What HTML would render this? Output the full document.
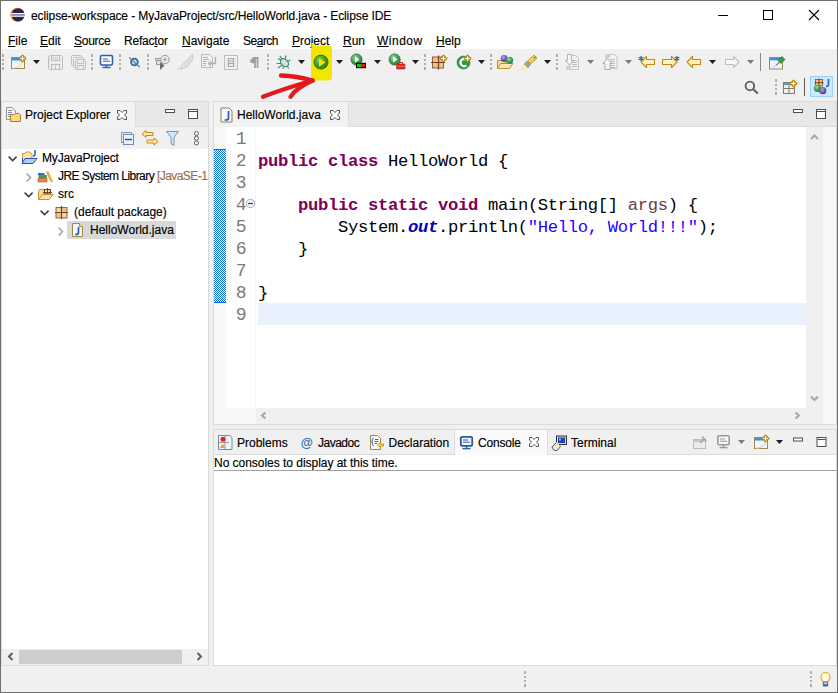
<!DOCTYPE html>
<html><head><meta charset="utf-8">
<style>
html,body{margin:0;padding:0}
body{width:838px;height:693px;overflow:hidden;position:relative;background:#f0f0f0;font-family:"Liberation Sans",sans-serif;font-size:12px;color:#000}
.a{position:absolute}
.t{position:absolute;white-space:nowrap;line-height:1;-webkit-text-stroke:0.15px currentColor}
svg{position:absolute;overflow:visible}
.mono{font-family:"Liberation Mono",monospace}
u{text-decoration:underline;text-decoration-thickness:1px}
</style></head><body>

<!-- title + menu bar -->
<div class="a" style="left:1px;top:1px;width:836px;height:48px;background:#fff"></div>

<!-- toolbar area already body bg -->

<!-- LEFT PANEL -->
<div class="a" style="left:1px;top:101px;width:208px;height:565px;box-sizing:border-box;border:1px solid #dadada;background:#fff"></div>
<div class="a" style="left:2px;top:102px;width:133px;height:25px;background:#f2f2f2"></div>
<div class="a" style="left:135px;top:102px;width:1px;height:25px;background:#dcdcdc"></div>
<div class="a" style="left:136px;top:102px;width:72px;height:24px;background:#e8e8e8"></div>
<div class="a" style="left:136px;top:126px;width:72px;height:1px;background:#dcdcdc"></div>
<div class="a" style="left:2px;top:127px;width:206px;height:22px;background:#f0f0f0"></div>
<!-- h scrollbar -->
<div class="a" style="left:2px;top:649px;width:206px;height:16px;background:#f0f0f0"></div>
<div class="a" style="left:19px;top:650px;width:163px;height:14px;background:#cdcdcd"></div>

<!-- EDITOR PANEL -->
<div class="a" style="left:213px;top:101px;width:624px;height:324px;box-sizing:border-box;border:1px solid #dadada;background:#fff"></div>
<div class="a" style="left:214px;top:102px;width:134px;height:25px;background:#f2f2f2"></div>
<div class="a" style="left:348px;top:102px;width:1px;height:25px;background:#dcdcdc"></div>
<div class="a" style="left:349px;top:102px;width:487px;height:24px;background:#e8e8e8"></div>
<div class="a" style="left:349px;top:126px;width:487px;height:1px;background:#dcdcdc"></div>
<!-- ruler -->
<div class="a" style="left:214px;top:127px;width:12px;height:297px;background:#f7f7f7"></div>
<div class="a" style="left:214px;top:149px;width:12px;height:154px;background-color:#fff;background-image:conic-gradient(#0a6fe0 25%,#fff 0 50%,#0a6fe0 0 75%,#fff 0);background-size:2px 2px"></div>
<div class="a" style="left:214px;top:149px;width:12px;height:1px;background:#0a6fe0"></div>
<div class="a" style="left:214px;top:302px;width:12px;height:1px;background:#0a6fe0"></div>
<div class="a" style="left:255px;top:127px;width:1px;height:281px;background:#f4f4f4"></div>
<div class="a" style="left:258px;top:303px;width:548px;height:22px;background:#e8f2fe"></div>
<!-- v scrollbar -->
<div class="a" style="left:806px;top:127px;width:17px;height:297px;background:#f0f0f0"></div>
<div class="a" style="left:823px;top:127px;width:13px;height:297px;background:#f7f7f7"></div>
<div class="a" style="left:214px;top:408px;width:42px;height:16px;background:#f7f7f7"></div>
<div class="a" style="left:256px;top:408px;width:567px;height:16px;background:#f0f0f0"></div>

<!-- CONSOLE PANEL -->
<div class="a" style="left:213px;top:429px;width:624px;height:237px;box-sizing:border-box;border:1px solid #dadada;background:#fff"></div>
<div class="a" style="left:214px;top:430px;width:240px;height:24px;background:#f0f0f0"></div>
<div class="a" style="left:214px;top:454px;width:240px;height:1px;background:#dcdcdc"></div>
<div class="a" style="left:454px;top:430px;width:1px;height:25px;background:#dcdcdc"></div>
<div class="a" style="left:455px;top:430px;width:92px;height:25px;background:#fafafa"></div>
<div class="a" style="left:547px;top:430px;width:1px;height:25px;background:#dcdcdc"></div>
<div class="a" style="left:548px;top:430px;width:288px;height:24px;background:#f0f0f0"></div>
<div class="a" style="left:548px;top:454px;width:288px;height:1px;background:#dcdcdc"></div>
<div class="a" style="left:214px;top:470px;width:622px;height:1px;background:#a0a0a0"></div>


<!-- TITLE TEXT -->
<div class="t" style="left:31px;top:10px;letter-spacing:-0.106px">eclipse-workspace - MyJavaProject/src/HelloWorld.java - Eclipse IDE</div>
<!-- MENU -->
<div class="t" style="left:8px;top:35px"><u>F</u>ile</div>
<div class="t" style="left:40px;top:35px"><u>E</u>dit</div>
<div class="t" style="left:74px;top:35px;letter-spacing:-0.25px"><u>S</u>ource</div>
<div class="t" style="left:124px;top:35px;letter-spacing:-0.2px">Refac<u>t</u>or</div>
<div class="t" style="left:182px;top:35px"><u>N</u>avigate</div>
<div class="t" style="left:243px;top:35px;letter-spacing:-0.5px">Se<u>a</u>rch</div>
<div class="t" style="left:292px;top:35px"><u>P</u>roject</div>
<div class="t" style="left:343px;top:35px"><u>R</u>un</div>
<div class="t" style="left:377px;top:35px;letter-spacing:0.5px"><u>W</u>indow</div>
<div class="t" style="left:436px;top:35px"><u>H</u>elp</div>

<!-- TAB TEXTS -->
<div class="t" style="left:25px;top:109px">Project Explorer</div>
<div class="t" style="left:237px;top:109px">HelloWorld.java</div>

<!-- TREE -->
<div class="a" style="left:2px;top:149px;width:206px;height:500px;overflow:hidden">
<div class="a" style="left:65px;top:72px;width:109px;height:18px;background:#d9d9d9"></div>
<div class="t" style="left:40px;top:3px;letter-spacing:-0.15px">MyJavaProject</div>
<div class="t" style="left:56px;top:21px;letter-spacing:-0.55px">JRE System Library <span style="color:#95724a;letter-spacing:-0.55px">[JavaSE-1.8]</span></div>
<div class="t" style="left:56px;top:39px">src</div>
<div class="t" style="left:72px;top:57px">(default package)</div>
<div class="t" style="left:88px;top:75px">HelloWorld.java</div>
</div>
<!-- LINE NUMBERS -->
<div class="a mono" style="left:226px;top:127px;width:20.5px;text-align:right;font-size:18px;line-height:22px;color:#7a7a7a;padding-top:1px">1<br>2<br>3<br>4<br>5<br>6<br>7<br>8<br>9</div>
<!-- CODE -->
<div class="a mono" style="left:258px;top:127px;font-size:17.2px;letter-spacing:-0.32px;line-height:22px;white-space:pre;padding-top:1.5px;color:#000"><br><b style="color:#7f0055">public</b> <b style="color:#7f0055">class</b> HelloWorld {
<br>    <b style="color:#7f0055">public</b> <b style="color:#7f0055">static</b> <b style="color:#7f0055">void</b> main(String[] <span style="color:#6a3e3e">args</span>) {
        System.<b style="color:#0000c0;font-style:italic">out</b>.println(<span style="color:#2a00ff">"Hello, World!!!"</span>);
    }
<br>}
</div>

<!-- CONSOLE TABS -->
<div class="t" style="left:237px;top:437px">Problems</div>
<div class="t" style="left:318px;top:437px;letter-spacing:-0.5px">Javadoc</div>
<div class="t" style="left:388.5px;top:437px">Declaration</div>
<div class="t" style="left:478px;top:437px;letter-spacing:-0.2px">Console</div>
<div class="t" style="left:571px;top:437px">Terminal</div>
<div class="t" style="left:214px;top:457px;letter-spacing:-0.03px">No consoles to display at this time.</div>

<!-- ICONS1 -->
<svg class="a" style="left:0;top:0" width="838" height="693" viewBox="0 0 838 693">
<defs>
 <g id="dots"><rect x="0" y="0" width="2" height="3" fill="#b8ae9a"/><rect x="0" y="5" width="2" height="2" fill="#b8ae9a"/><rect x="0" y="9" width="2" height="2" fill="#b8ae9a"/><rect x="0" y="13" width="2" height="3" fill="#b8ae9a"/></g>
 <path id="dd" d="M0 0h7l-3.5 4z"/>
 <g id="sparkle"><path d="M0 -3.3 L3.3 0 L0 3.3 L-3.3 0Z" fill="#c69c24" stroke="#b48a18" stroke-width="1.4" stroke-linejoin="round"/><path d="M0 -2.3V2.3M-2.3 0H2.3" stroke="#fffbe8" stroke-width="1.1"/></g>
 <g id="closex"><path d="M0.5 0.5H3L5 2.5L7 0.5H9.5V3L7.5 5L9.5 7V9.5H7L5 7.5L3 9.5H0.5V7L2.5 5L0.5 3Z" fill="#fff" stroke="#505050" stroke-width="1"/></g>
 <g id="minbtn"><rect x="0.5" y="0.5" width="9" height="3" fill="#fff" stroke="#4d4d4d"/></g>
 <g id="maxbtn"><rect x="0.5" y="0.5" width="9" height="9" fill="#fff" stroke="#4d4d4d"/><path d="M1 2.5H9" stroke="#4d4d4d"/></g>
 <radialGradient id="gGreen" cx="0.4" cy="0.35" r="0.7"><stop offset="0" stop-color="#8fd45a"/><stop offset="0.6" stop-color="#3e9a1a"/><stop offset="1" stop-color="#2a7a10"/></radialGradient>
 <radialGradient id="gGreen2" cx="0.4" cy="0.35" r="0.7"><stop offset="0" stop-color="#9fd8a0"/><stop offset="0.6" stop-color="#3d9a50"/><stop offset="1" stop-color="#2a7a38"/></radialGradient>
 <radialGradient id="gPurple" cx="0.4" cy="0.35" r="0.7"><stop offset="0" stop-color="#b8a8e8"/><stop offset="0.6" stop-color="#6a52b8"/><stop offset="1" stop-color="#4a3890"/></radialGradient>
</defs>

<!-- title icon -->
<circle cx="17.3" cy="14.8" r="7" fill="#f7941e"/>
<circle cx="18.1" cy="14.8" r="6.6" fill="#2c2255"/>
<rect x="11.2" y="13" width="13.8" height="1.1" fill="#fff"/>
<rect x="11.2" y="14.1" width="13.8" height="1.6" fill="#9a93b8"/>
<rect x="11.2" y="15.7" width="13.8" height="1.1" fill="#fff"/>
<!-- window controls -->
<path d="M718 15.5H728" stroke="#000" stroke-width="1"/>
<rect x="763.5" y="10.5" width="9" height="9" fill="none" stroke="#000"/>
<path d="M809 10L819 20M819 10L809 20" stroke="#000" stroke-width="1.1"/>

<!-- toolbar row 1 -->
<use href="#dots" x="2" y="54"/>
<use href="#dots" x="91" y="54"/>
<use href="#dots" x="119" y="54"/>
<use href="#dots" x="147" y="54"/>
<use href="#dots" x="267" y="54"/>
<use href="#dots" x="424" y="54"/>
<use href="#dots" x="490" y="54"/>
<use href="#dots" x="556" y="54"/>
<use href="#dots" x="775" y="79"/>

<g fill="#1e1e1e">
<use href="#dd" x="33" y="60"/>
<use href="#dd" x="298" y="60"/>
<use href="#dd" x="336" y="60"/>
<use href="#dd" x="374" y="60"/>
<use href="#dd" x="412" y="60"/>
<use href="#dd" x="478" y="60"/>
<use href="#dd" x="544" y="60"/>
<use href="#dd" x="709" y="60"/>
<use href="#dd" x="776" y="440"/>
</g>
<g fill="#7a7a7a">
<use href="#dd" x="587" y="60"/>
<use href="#dd" x="625" y="60"/>
<use href="#dd" x="747" y="60"/>
<use href="#dd" x="738" y="440"/>
</g>

<!-- new wizard -->
<rect x="11.5" y="57.5" width="13" height="11" fill="#eef7fd" stroke="#a08a58"/>
<rect x="12" y="58" width="12" height="2.5" fill="#3f8fd6"/>
<path d="M13 68C18 68 22 66 23 60" stroke="#f0d890" stroke-width="1.2" fill="none"/>
<use href="#sparkle" x="22.5" y="58.5"/>

<!-- save disabled -->
<g fill="#ececec" stroke="#bdbdbd" stroke-width="1">
<path d="M48.5 57.5Q48.5 55.5 50.5 55.5H61.5L62.5 56.5V68.5Q62.5 69.5 61.5 69.5H49.5Q48.5 69.5 48.5 68.5Z"/>
<rect x="51.5" y="55.5" width="8" height="5"/>
<rect x="51.5" y="64.5" width="8" height="5"/>
</g>
<path d="M53 57.5H58M53 59H58" stroke="#d0d0d0"/>
<path d="M55.5 66V69" stroke="#bdbdbd"/>
<!-- save all disabled -->
<g fill="#ececec" stroke="#c2c2c2" stroke-width="1">
<rect x="71.5" y="55.5" width="10" height="10" rx="1"/>
<rect x="73.5" y="57.5" width="10" height="10" rx="1"/>
<path d="M75.5 60.5Q75.5 59.5 76.5 59.5H84.5L85.5 60.5V68.5Q85.5 69.5 84.5 69.5H76.5Q75.5 69.5 75.5 68.5Z"/>
<rect x="77.5" y="59.5" width="6" height="4"/>
<rect x="77.5" y="65.5" width="6" height="4"/>
</g>

<!-- monitor blue -->
<rect x="100.5" y="55.5" width="12" height="9.5" rx="1.5" fill="#fff" stroke="#2f5fa8" stroke-width="1.6"/>
<path d="M103 59H108M103 61.2H110" stroke="#2f5fa8" stroke-width="1"/>
<path d="M106.5 65V67" stroke="#2f5fa8" stroke-width="1.5"/>
<path d="M102.5 67.5H110.5" stroke="#2f5fa8" stroke-width="1.4"/>

<!-- skip breakpoints -->
<circle cx="134.4" cy="62" r="3.4" fill="#c8ddf0" stroke="#1f6fb5" stroke-width="1.8"/>
<path d="M129.3 57.5L139.8 67.3" stroke="#7a7a7a" stroke-width="1.2"/>

<!-- disabled toggle icon -->
<g stroke="#9a9a9a" fill="#e0e0e0" stroke-width="1">
<path d="M155.5 58.5H163.5V60.5H155.5Z"/>
<path d="M156.5 60.5H162.5V64.5H156.5Z"/>
<circle cx="165" cy="59.5" r="4.2" fill="#eaeaea"/>
</g>
<path d="M163 59.5H167M165 57.5V61.5" stroke="#9a9a9a" stroke-width="0.9"/>
<path d="M160 62L160 70L164.5 65.5Z" fill="#6e6e6e"/>

<!-- disabled pen -->
<path d="M192.5 54.5L183 64L186.5 67.5L193 59Z" fill="#dedede" stroke="#cacaca"/>
<path d="M183 64L180.5 68L186.5 67.5" fill="#eeeeee" stroke="#d0d0d0"/>
<path d="M177.5 68.8H183" stroke="#c8c8c8"/>

<!-- word wrap disabled -->
<path d="M201.5 54.5H209.5L212.5 57.5V67.5H201.5Z" fill="#f4f4f4" stroke="#b8b8b8"/>
<path d="M203 57.5H208M203 59.5H209M203 61.5H207M203 63.5H206M203 65.5H206" stroke="#b0b0b0"/>
<path d="M215.5 57V63.5H209.5" stroke="#b0b0b0" stroke-width="1.4" fill="none"/>
<path d="M211 61L208.5 63.5L211 66" stroke="#b0b0b0" stroke-width="1.3" fill="none"/>

<!-- block selection disabled -->
<rect x="224.5" y="55.5" width="13" height="14" fill="#f4f4f4" stroke="#bcbcbc"/>
<path d="M227 58V67.5M235 58V67.5" stroke="#bcbcbc" stroke-dasharray="1 1.2"/>
<rect x="228.5" y="58.5" width="5" height="8" fill="#ececec" stroke="#a8a8a8"/>
<path d="M229 61H233M229 63.5H233" stroke="#a8a8a8"/>
<!-- pilcrow -->
<path d="M252.5 58H258.5M255 58V68M257.5 58V68" stroke="#a0a0a0" stroke-width="1.8"/>
<path d="M255 58.2Q250 58.2 250 60.8Q250 63.4 255 63.4Z" fill="#a0a0a0"/>

<!-- bug -->
<g stroke="#3b8a7e" stroke-width="1.1" fill="none">
<path d="M278 58.5L282 61M276.5 63.5L281 63.5M278 68L281.5 65.5M286 55.5L285 59.5M290.5 60L287 61.5M289 68.5L286.5 65.5M283 69L283.5 66.5M280 56L282 59.5"/>
</g>
<ellipse cx="284.5" cy="62.7" rx="4.6" ry="3.4" transform="rotate(45 284.5 62.7)" fill="#c9e2b8" stroke="#2e7e8e" stroke-width="1.1"/>
<path d="M282.5 61L286.5 65" stroke="#eaf5e0" stroke-width="1"/>

<!-- yellow highlight -->
<rect x="311" y="45.5" width="21" height="35" rx="3.5" fill="#f2e600"/>
<rect x="311.5" y="43" width="2.5" height="4" fill="#f2e600"/>
<!-- run -->
<circle cx="321" cy="62.1" r="7" fill="url(#gGreen)" stroke="#2a7410" stroke-width="1"/>
<path d="M319 58.2V66.8L325.6 62.5Z" fill="#f4e400"/>

<!-- coverage -->
<circle cx="356.5" cy="59.5" r="5.6" fill="url(#gGreen2)" stroke="#2e7a3a" stroke-width="0.8"/>
<path d="M355 56.6V62.4L359.4 59.5Z" fill="#fff"/>
<rect x="356" y="62.8" width="10" height="5.4" fill="#000"/>
<rect x="357" y="63.8" width="4" height="3.4" fill="#18c018"/>
<rect x="361" y="63.8" width="4" height="3.4" fill="#e01818"/>

<!-- external tools -->
<circle cx="394.6" cy="59.5" r="5.6" fill="url(#gGreen2)" stroke="#2e7a3a" stroke-width="0.8"/>
<path d="M393.1 56.6V62.4L397.5 59.5Z" fill="#fff"/>
<rect x="396.5" y="64" width="8.5" height="5" rx="0.8" fill="#e02828" stroke="#b01010" stroke-width="0.6"/>
<path d="M399 64V62.5H402.5V64" stroke="#d02020" fill="none" stroke-width="1"/>
<path d="M396.5 66.3H405" stroke="#ff9a9a" stroke-width="0.6"/>

<!-- new package -->
<rect x="432.5" y="57" width="11" height="11" fill="#e6c48c" stroke="#9a5a3a"/>
<path d="M438.5 55.5V69.5M431 62.5H445" stroke="#7a3e28" stroke-width="1.2"/>
<use href="#sparkle" x="443.5" y="58.5"/>

<!-- new class -->
<circle cx="463.5" cy="62.5" r="6.5" fill="#2e9a3e" stroke="#1e7a2e" stroke-width="0.6"/>
<path d="M466.3 59.6A3.6 3.6 0 1 0 466.3 65.4" stroke="#fff" stroke-width="2.2" fill="none"/>
<use href="#sparkle" x="467.6" y="58.5"/>

<!-- open type folder -->
<path d="M497.5 60.5H503L504.5 62H508.5V68.5H497.5Z" fill="#f8dc98" stroke="#c08a3a"/>
<path d="M497.5 68.5L500.5 63.5H513L509.5 68.5Z" fill="#fbe7b0" stroke="#c08a3a"/>
<circle cx="504.1" cy="58.4" r="3.4" fill="url(#gPurple)"/>
<circle cx="509.6" cy="60.2" r="3.5" fill="url(#gGreen2)"/>

<!-- pen (open task) -->
<path d="M521.5 69.5L524.5 64L528 67.5Z" fill="#fffbd8" stroke="#f0d060" stroke-width="0.8"/>
<path d="M524.5 64L527.5 61L530.5 64L528 67.5Z" fill="#a8a8a8" stroke="#6e6e6e" stroke-width="0.8"/>
<path d="M527.5 61L534 55L537 58L530.5 64Z" fill="#f2c64a" stroke="#b88a20" stroke-width="0.8"/>
<path d="M529 61.5L534.5 56.5" stroke="#fff0b0" stroke-width="0.8"/>
<circle cx="534.5" cy="57.5" r="0.8" fill="#2050a0"/>

<!-- disabled download doc -->
<path d="M569.5 55.5H575.5L578.5 58.5V69.5H569.5Z" fill="#f2f2f2" stroke="#c4c4c4"/>
<path d="M572 60.5H577M572 62.5H577M572 64.5H577M572 66.5H577" stroke="#bdbdbd"/>
<path d="M567.5 54.5V60.5H565.5L569.5 65L573.5 60.5H571.5V54.5Z" fill="#f6f6f6" stroke="#b0b0b0"/>
<rect x="566" y="66" width="5" height="3.5" fill="#d0d0d0"/>

<!-- disabled upload doc -->
<path d="M606.5 54.5H614.5L617 57V68.5H606.5Z" fill="#f2f2f2" stroke="#c4c4c4"/>
<rect x="605" y="55" width="5" height="3" fill="#cfcfcf"/>
<path d="M610 59.5H615M610 61.5H615M610 63.5H615M610 65.5H615M610 67.5H615" stroke="#bdbdbd"/>
<path d="M605 69.5V63.5H603L607.5 58.5L612 63.5H610V69.5Z" fill="#f8f8f8" stroke="#aaaaaa"/>

<!-- back to last edit -->
<path d="M641 62L646.5 56.5V59.5H654.5V64.5H646.5V67.5Z" fill="#fff2b8" stroke="#c08a18" stroke-width="1.1" stroke-linejoin="round"/>
<path d="M641 56V61M638.7 57.3L643.3 59.7M643.3 57.3L638.7 59.7" stroke="#2a5a9a" stroke-width="1.1"/>
<!-- forward w asterisk -->
<path d="M677 62L671.5 56.5V59.5H662.5V64.5H671.5V67.5Z" fill="#fff2b8" stroke="#c08a18" stroke-width="1.1" stroke-linejoin="round"/>
<path d="M677 56V61M674.7 57.3L679.3 59.7M679.3 57.3L674.7 59.7" stroke="#2a5a9a" stroke-width="1.1"/>
<!-- back -->
<path d="M687 62L692.5 56.5V59.5H700.5V64.5H692.5V67.5Z" fill="#fff2b8" stroke="#c08a18" stroke-width="1.1" stroke-linejoin="round"/>
<!-- forward disabled -->
<path d="M739 62L733.5 56.5V59.5H725.5V64.5H733.5V67.5Z" fill="#f8f8f8" stroke="#bdbdbd" stroke-width="1.1" stroke-linejoin="round"/>
<!-- separator -->
<rect x="760" y="53" width="1" height="18" fill="#8a8a8a"/>
<!-- pin editor -->
<rect x="769.5" y="57.5" width="13" height="11.5" fill="#eaf4fb" stroke="#a08a58"/>
<rect x="770" y="58" width="12" height="2.3" fill="#3f8fd6"/>
<path d="M772 67.5Q777 67 779 63" stroke="#c8e0f0" stroke-width="1" fill="none"/>
<path d="M778 60.5L782 56.5L785 59.5L781 63.5Z" fill="#3ca04a" stroke="#207a2a" stroke-width="0.7"/>
<path d="M779.5 62L776 65.5" stroke="#404040" stroke-width="1"/>

<!-- ROW 2 -->
<circle cx="749.9" cy="85.9" r="4.3" fill="none" stroke="#5f5f5f" stroke-width="1.9"/>
<path d="M753 89L757.8 93.6" stroke="#5f5f5f" stroke-width="2.1"/>
<!-- open perspective -->
<rect x="783.5" y="82.5" width="11" height="11" fill="#eaf4fb" stroke="#8a7a58"/>
<rect x="784" y="83" width="10" height="2.2" fill="#4f9ee0"/>
<path d="M789 85.5V93M784 88.5H794" stroke="#8a7a58"/>
<use href="#sparkle" x="793.5" y="83.5"/>
<rect x="804" y="78" width="1" height="18" fill="#5a5a5a"/>
<!-- java perspective button -->
<rect x="810.5" y="76.5" width="22" height="20" fill="#cce8ff" stroke="#99d1ff"/>
<rect x="815.5" y="79.5" width="7" height="6.5" fill="#e6c48c" stroke="#8a4a2a" stroke-width="0.8"/>
<path d="M819 78.5V87M814.5 82.7H823.5" stroke="#7a3e28" stroke-width="1"/>
<path d="M828.5 79V84.5Q828.5 86.5 826 86.5" stroke="#2a5fb0" stroke-width="1.6" fill="none"/>
<circle cx="822.7" cy="90.7" r="3.6" fill="url(#gPurple)"/>
<circle cx="817.4" cy="88.3" r="3.6" fill="url(#gGreen2)"/>

<!-- red arrow -->
<g stroke="#e3191c" stroke-width="4.3" stroke-linecap="round" fill="none" stroke-linejoin="round">
<path d="M263 96.8Q283 89 312.6 80.5"/>
<path d="M281 75.5Q296 76 312.6 80.5"/>
<path d="M290.5 96.8Q296 88 312.6 80.5"/>
</g>
</svg>

<!-- ICONS2 -->
<svg class="a" style="left:0;top:0" width="838" height="693" viewBox="0 0 838 693">
<!-- PE tab icon -->
<path d="M6.5 107.5H12L15.5 111V119.5H6.5Z" fill="#f6f3ea" stroke="#a89060"/>
<path d="M8 110.5H12M8 112.5H12M8 114.5H10.5M8 116.5H10.5" stroke="#6a8fd0" stroke-width="1"/>
<path d="M10.5 114.5H14.5L15.5 113.5H19L20.5 115V121.5H10.5Z" fill="#f8d97e" stroke="#b07a30" stroke-linejoin="round"/>
<use href="#closex" x="117" y="110"/>
<use href="#minbtn" x="165" y="109"/>
<use href="#maxbtn" x="188" y="109"/>
<!-- editor tab icon -->
<path d="M221 108H229L232 111V122H221Z" fill="#f4f8fc" stroke="#9a8040"/>
<path d="M228.5 111V118Q228.5 120 226 120H224.5" stroke="#2a5fb0" stroke-width="1.7" fill="none"/>
<use href="#closex" x="330" y="110"/>
<use href="#minbtn" x="793" y="109"/>
<use href="#maxbtn" x="816" y="109"/>
<!-- PE toolbar -->
<rect x="121.5" y="132.5" width="10" height="10" fill="#dce8f5" stroke="#8a9ab5"/>
<rect x="123.5" y="134.5" width="10" height="10" fill="#e6f2fc" stroke="#7a8aa8"/>
<path d="M125 139.5H132" stroke="#1f4f8f" stroke-width="1.4"/>
<g fill="#ffe9a8" stroke="#c08a18" stroke-width="1" stroke-linejoin="round">
<path d="M142 134L146 130.5V132.5H153V135.5H146V137.5Z"/>
<path d="M158 141.5L154 138V140H147V143H154V145Z"/>
</g>
<path d="M166.5 131.5H178.5L174 137.5V145.5L171 143.5V137.5Z" fill="#cfe6f8" stroke="#7f92ae" stroke-linejoin="round"/>
<g fill="#fff" stroke="#5a5a5a" stroke-width="1"><circle cx="196.4" cy="133.5" r="2"/><circle cx="196.4" cy="138.2" r="2"/><circle cx="196.4" cy="142.9" r="2"/></g>

<!-- TREE -->
<g stroke="#404040" stroke-width="1.5" fill="none">
<path d="M8.6 156.6L12.6 160.6L16.6 156.6"/>
<path d="M24.6 192.6L28.6 196.6L32.6 192.6"/>
<path d="M40.6 210.6L44.6 214.6L48.6 210.6"/>
</g>
<g stroke="#a8a8a8" stroke-width="1.5" fill="none">
<path d="M26.6 173.6L30.6 177.6L26.6 181.6"/>
<path d="M58.6 227.6L62.6 231.6L58.6 235.6"/>
</g>
<!-- project icon -->
<path d="M22.5 163.5V153.5H25L26 152H30L31 153.5H32V158" fill="#fbe3a0" stroke="#c89a50"/>
<path d="M22 163.5L25 158.5H37L33 163.5Z" fill="#a6d2fa" stroke="#2f4fb0" stroke-linejoin="round"/>
<path d="M22.5 163.5V158" stroke="#2f4fb0"/>
<path d="M35 150V154.5Q35 156 33 156" stroke="#2a5fb0" stroke-width="1.5" fill="none"/>
<!-- JRE books -->
<rect x="38" y="173" width="6.5" height="2" fill="#2a72c8"/>
<rect x="39" y="175.2" width="7.5" height="2.8" fill="#3aa06a" stroke="#2a7a4a" stroke-width="0.5"/>
<rect x="38" y="178.3" width="9" height="3.7" fill="#e8894a" stroke="#a85a2a" stroke-width="0.6"/>
<path d="M47 171.5L52 182" stroke="#e8b040" stroke-width="2.6"/>
<!-- src folder -->
<path d="M38.5 199V191.5Q38.5 190.5 39.5 190.5V189.5H44V191H45V199Z" fill="#f8dc98" stroke="#c8902a" stroke-linejoin="round"/>
<rect x="44.5" y="189.5" width="6" height="4.5" fill="#f5dc9a" stroke="#6e4030"/>
<path d="M47.5 188V194.5M43 192.5H52" stroke="#6e4030" stroke-width="1"/>
<path d="M38.5 199.5L42.5 194.5H53L49 199.5Z" fill="#fbe4a4" stroke="#c8902a" stroke-linejoin="round"/>
<!-- package -->
<rect x="56" y="207.5" width="11" height="10.5" fill="#e6c48c" stroke="#a0604a"/>
<rect x="57" y="208.5" width="4" height="4" fill="#f2dcaa"/>
<rect x="62" y="213.5" width="4" height="3.5" fill="#f2dcaa"/>
<path d="M61.5 206V219M55 212.5H68" stroke="#7a3e28" stroke-width="1.2"/>
<!-- java file -->
<path d="M72.5 223.5H79.5L82.5 226.5V236.5H72.5Z" fill="#f2f7fc" stroke="#a08a3a"/>
<path d="M79.5 223.5V226.5H82.5" fill="#f8e8b0" stroke="#a08a3a"/>
<path d="M78.5 227V232.5Q78.5 234.5 76 234.5H75" stroke="#2a5fb0" stroke-width="1.7" fill="none"/>

<!-- EDITOR fold -->
<circle cx="250.5" cy="203.5" r="4.2" fill="#eef2f8" stroke="#a4aebc"/>
<path d="M248 203.5H253" stroke="#404040" stroke-width="1.2"/>
<!-- scroll arrows -->
<g stroke="#a6a6a6" stroke-width="2" fill="none">
<path d="M811 139L814.5 135.5L818 139"/>
<path d="M811 396.5L814.5 400L818 396.5"/>
<path d="M265.5 412.5L262 415.5L265.5 418.5"/>
<path d="M795.5 412.5L799 415.5L795.5 418.5"/>
</g>
<g stroke="#606060" stroke-width="2" fill="none">
<path d="M12.5 653L9 656.5L12.5 660"/>
<path d="M197.5 653L201 656.5L197.5 660"/>
</g>

<!-- CONSOLE TABS -->
<!-- problems -->
<path d="M218.5 435.5H230L232 438V449.5H218.5Z" fill="#eef4fa" stroke="#7a8aa0"/>
<path d="M225 435.5V449.5M218.5 442.5H229" stroke="#8a9ab0"/>
<circle cx="223" cy="439.2" r="2.5" fill="#e82020"/>
<path d="M220 448L222 444.5H223.5L225.5 448Z" fill="#f5a020"/>
<!-- @ -->
<text x="300.5" y="447" font-family="Liberation Sans" font-style="italic" font-size="12.5" fill="#2f6fb5" font-weight="bold">@</text>
<!-- declaration -->
<path d="M370.5 435.5H377.5L380.5 438.5V449.5H370.5Z" fill="#f6f8fb" stroke="#a08a48"/>
<path d="M373.8 438Q372.4 438 372.4 439.5V441Q372.4 441.8 371.4 441.8Q372.4 441.8 372.4 442.6V444.2Q372.4 445.6 373.8 445.6" stroke="#3a6ab0" stroke-width="1" fill="none"/><path d="M374.8 439.5H378.3M374.8 441.5H378.3M374.8 443.5H377" stroke="#3a6ab0" stroke-width="1"/>
<path d="M377.5 445L380.5 442.5V444H383.5V446H380.5V447.5Z" fill="#ffd24a" stroke="#c08a18" stroke-width="0.8" stroke-linejoin="round"/>
<!-- console icon -->
<rect x="460.8" y="436.8" width="11.4" height="9" rx="1.3" fill="#f4f8ff" stroke="#2a58a0" stroke-width="1.8"/>
<path d="M463 440H468M463 442.2H470" stroke="#2f5fa8" stroke-width="1"/>
<path d="M466.5 446V448" stroke="#2f5fa8" stroke-width="1.5"/>
<path d="M462.5 448.6H470.5" stroke="#2f5fa8" stroke-width="1.4"/>
<use href="#closex" x="529" y="437"/>
<!-- terminal -->
<rect x="556.5" y="436" width="10" height="8.5" fill="#d8d8d8" stroke="#303030"/>
<rect x="558" y="437.5" width="7" height="5.5" fill="#1a40c8"/>
<rect x="559" y="438.5" width="2" height="2" fill="#80c0ff"/>
<path d="M552 447L556.5 442.5L560.5 446.5L557 450.5Q553 451 552 447Z" fill="#e8e8e8" stroke="#404040" stroke-width="0.9"/>
<path d="M556.5 442.5L560 446" stroke="#e8d020" stroke-width="1"/>
<!-- console toolbar -->
<rect x="693.5" y="439.5" width="12" height="9" fill="#ececec" stroke="#bcbcbc"/>
<rect x="694" y="440" width="11" height="2" fill="#c8c8c8"/>
<path d="M700 443L704 439M702 436.5L706.5 441" stroke="#a0a0a0" stroke-width="1.3"/>
<rect x="717.8" y="435.8" width="11.4" height="9" rx="1.3" fill="#f6f6f6" stroke="#9a9a9a" stroke-width="1.6"/>
<path d="M720 439H725M720 441.2H727" stroke="#9a9a9a" stroke-width="1"/>
<path d="M723.5 445V447" stroke="#9a9a9a" stroke-width="1.5"/>
<path d="M719.5 447.6H727.5" stroke="#9a9a9a" stroke-width="1.4"/>
<rect x="754.5" y="437.5" width="13" height="11" fill="#eef7fd" stroke="#a08a58"/>
<rect x="755" y="438" width="12" height="2.5" fill="#3f8fd6"/>
<path d="M756 448C761 448 765 446 766 440" stroke="#f0d890" stroke-width="1.2" fill="none"/>
<use href="#sparkle" x="765.5" y="438.5"/>
<use href="#minbtn" x="793" y="437.5"/>
<use href="#maxbtn" x="816.5" y="437"/>

<!-- STATUS BAR -->
<use href="#dots" x="524" y="671"/>
<use href="#dots" x="810" y="671"/>
<path d="M823 681.5Q821 679.5 821 677A4.5 4.5 0 1 1 830 677Q830 679.5 828 681.5Z" fill="#fffbe0" stroke="#f2a620" stroke-width="1.2" stroke-linejoin="round"/>
<circle cx="825.5" cy="678.5" r="2" fill="#fff"/>
<rect x="822.8" y="681.8" width="5.4" height="4.8" rx="1" fill="#4e6a90"/>
<rect x="823.8" y="682.6" width="3.4" height="1.4" fill="#d8e4f4"/>
</svg>

<!-- window border -->
<div class="a" style="left:0;top:0;width:838px;height:693px;box-sizing:border-box;border:1px solid #6f6f6f"></div>

</body></html>
